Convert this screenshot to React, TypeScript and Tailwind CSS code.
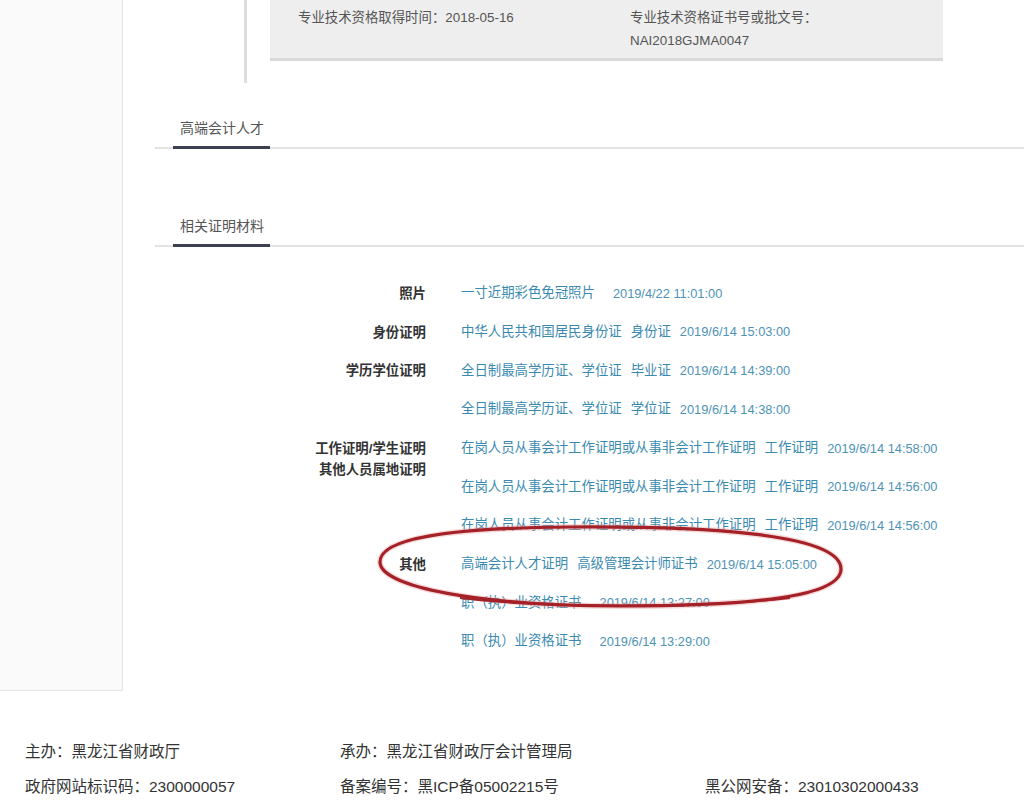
import React from 'react';

interface Item {
  name: string;
  type: string;
  time: string;
}

interface Group {
  label: string[];
  items: Item[];
}

const groups: Group[] = [
  { label: ['照片'], items: [{ name: '一寸近期彩色免冠照片', type: '', time: '2019/4/22 11:01:00' }] },
  { label: ['身份证明'], items: [{ name: '中华人民共和国居民身份证', type: '身份证', time: '2019/6/14 15:03:00' }] },
  {
    label: ['学历学位证明'],
    items: [
      { name: '全日制最高学历证、学位证', type: '毕业证', time: '2019/6/14 14:39:00' },
      { name: '全日制最高学历证、学位证', type: '学位证', time: '2019/6/14 14:38:00' },
    ],
  },
  {
    label: ['工作证明/学生证明', '其他人员属地证明'],
    items: [
      { name: '在岗人员从事会计工作证明或从事非会计工作证明', type: '工作证明', time: '2019/6/14 14:58:00' },
      { name: '在岗人员从事会计工作证明或从事非会计工作证明', type: '工作证明', time: '2019/6/14 14:56:00' },
      { name: '在岗人员从事会计工作证明或从事非会计工作证明', type: '工作证明', time: '2019/6/14 14:56:00' },
    ],
  },
  {
    label: ['其他'],
    items: [
      { name: '高端会计人才证明', type: '高级管理会计师证书', time: '2019/6/14 15:05:00' },
      { name: '职（执）业资格证书', type: '', time: '2019/6/14 13:27:00' },
      { name: '职（执）业资格证书', type: '', time: '2019/6/14 13:29:00' },
    ],
  },
];

const SectionTab: React.FC<{ title: string; className?: string }> = ({ title, className }) => (
  <div className={`ml-[32px] ${className ?? ''}`}>
    <div className="pl-[25px] text-[14px] leading-[20px] text-[#555]">{title}</div>
    <div className="mt-[8px] flex items-end h-[3px]">
      <div className="w-[18px] h-[2px] bg-[#e3e3e3]" />
      <div className="w-[97px] h-[3px] bg-[#3b4150]" />
      <div className="flex-1 h-[2px] bg-[#e3e3e3]" />
    </div>
  </div>
);

// hand-drawn loop around the "其他" row
const markPath =
  'M 10 57 C 10 33, 80 23, 200 22 C 330 21, 471 28, 471 64 C 471 92, 380 101, 250 101 C 110 101, 10 82, 10 57 Z';

const App: React.FC = () => {
  return (
    <div
      className="relative w-full min-h-[811px] bg-white overflow-hidden"
      style={{ fontFamily: '"Liberation Sans", "Noto Sans CJK SC", sans-serif' }}
    >
      <div className="flex">
        {/* Sidebar */}
        <div className="w-[123px] shrink-0 bg-[#fafafa] border-r border-b border-[#e4e4e4]" />

        {/* Main content */}
        <div className="flex-1 pb-[30px]">
          <div className="flex items-start pl-[121px]">
            <div className="w-[3px] h-[83px] bg-[#dedede]" />
            <div className="ml-[23px] w-[673px] h-[61px] bg-[#eeeeee] border-b-[3px] border-[#d9d9d9] pl-[28px] pt-[6px] grid grid-cols-[332px_1fr] text-[13.4px] leading-[23px] text-[#555]">
              <div>专业技术资格取得时间：2018-05-16</div>
              <div>
                <div>专业技术资格证书号或批文号：</div>
                <div>NAI2018GJMA0047</div>
              </div>
            </div>
          </div>

          <SectionTab title="高端会计人才" className="mt-[35px]" />
          <SectionTab title="相关证明材料" className="mt-[67px]" />

          <div className="ml-[32px] mt-[27px]">
            {groups.map((g, gi) => (
              <div key={gi} className="flex">
                <div className="w-[271px] shrink-0 text-right pt-[9px] text-[13.4px] leading-[21px] font-bold text-[#333]">
                  {g.label.map((l, li) => (
                    <div key={li}>{l}</div>
                  ))}
                </div>
                <div className="pl-[35px]">
                  {g.items.map((it, ii) => (
                    <div key={ii} className="h-[38.7px] flex items-center text-[13.4px] text-[#3a8ab0] whitespace-nowrap">
                      <span className="mr-[9px]">{it.name}</span>
                      <span className="mr-[9px]">{it.type}</span>
                      <span className="text-[12.8px] text-[#4d93b6]">{it.time}</span>
                    </div>
                  ))}
                </div>
              </div>
            ))}
          </div>
        </div>
      </div>

      {/* Footer */}
      <div className="pt-[50px] px-[25px] text-[15.5px] leading-[22px] text-[#333]">
        <div className="grid grid-cols-[315px_365px_1fr]">
          <div>主办：黑龙江省财政厅</div>
          <div>承办：黑龙江省财政厅会计管理局</div>
          <div />
        </div>
        <div className="grid grid-cols-[315px_365px_1fr] mt-[13px]">
          <div>政府网站标识码：2300000057</div>
          <div>备案编号：黑ICP备05002215号</div>
          <div>黑公网安备：23010302000433</div>
        </div>
      </div>

      <svg
        className="absolute left-[370px] top-[505px] w-[490px] h-[115px] pointer-events-none"
        viewBox="0 0 490 115"
      >
        <path d={markPath} fill="none" stroke="#e9a3a3" strokeWidth="6" opacity="0.4" />
        <path d={markPath} fill="none" stroke="#a52128" strokeWidth="3.2" />
        <path d="M 90 93 C 160 102, 320 104, 420 93" fill="none" stroke="#a52128" strokeWidth="2" />
      </svg>
    </div>
  );
};

export default App;
